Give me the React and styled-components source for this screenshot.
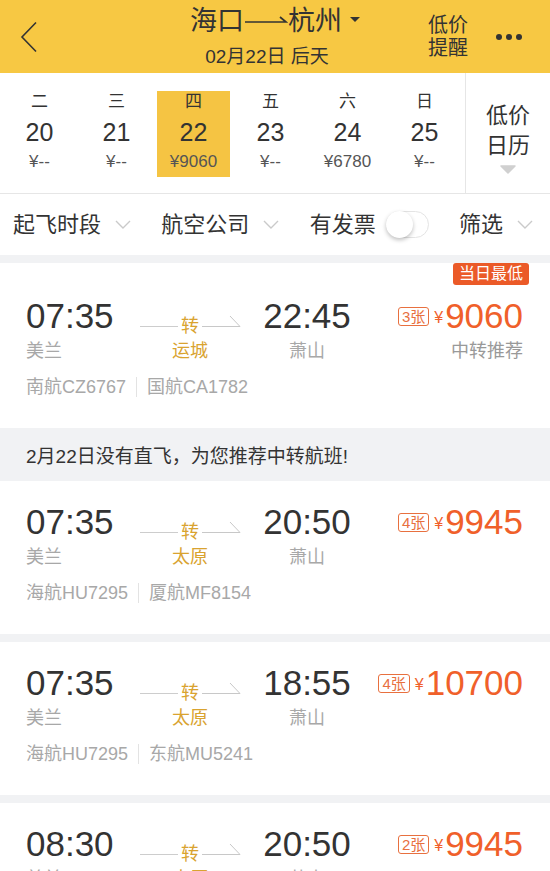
import React from 'react';
import styled, { createGlobalStyle } from 'styled-components';

const GlobalStyle = createGlobalStyle`
  html, body {
    margin: 0;
    padding: 0;
    background: #f1f2f4;
    overflow: hidden;
  }
  body {
    font-family: "Liberation Sans", "Noto Sans CJK SC", sans-serif;
    color: #333;
    -webkit-font-smoothing: antialiased;
  }
`;

const yellow = '#f7c843';
const orange = '#f0602a';
const gold = '#d9a330';

const Page = styled.div`
  width: 550px;
  height: 871px;
  overflow: hidden;
  background: #f1f2f4;
`;

/* ---------- header ---------- */

const Header = styled.header`
  display: grid;
  grid-template-columns: 1fr auto 1fr;
  align-items: center;
  height: 73px;
  background: ${yellow};
`;

const BackButton = styled.div`
  display: flex;
  align-items: center;
  padding-left: 20px;
`;

const TitleBlock = styled.div`
  display: flex;
  flex-direction: column;
  align-items: center;
  padding-bottom: 1px;
`;

const Title = styled.div`
  display: flex;
  align-items: center;
  font-size: 27px;
  line-height: 32px;
  color: #333;
`;

const Caret = styled.span`
  width: 0;
  height: 0;
  margin: -2px 0 0 8px;
  border-left: 5px solid transparent;
  border-right: 5px solid transparent;
  border-top: 5px solid #333;
`;

const Subtitle = styled.div`
  margin-top: 9px;
  padding-right: 16px;
  font-size: 19px;
  line-height: 22px;
  color: #333;
`;

const HeaderActions = styled.div`
  display: flex;
  align-items: center;
  justify-content: flex-end;
  padding-right: 28px;
`;

const RemindButton = styled.div`
  font-size: 20px;
  line-height: 23px;
  color: #333;
`;

const MoreDots = styled.div`
  display: flex;
  gap: 4px;
  margin-left: 28px;

  span {
    width: 6px;
    height: 6px;
    border-radius: 50%;
    background: #333;
  }
`;

/* ---------- date strip ---------- */

const DateStrip = styled.div`
  display: flex;
  height: 120px;
  background: #fff;
  border-bottom: 1px solid #e6e6e6;
`;

const Days = styled.div`
  display: grid;
  grid-template-columns: repeat(6, 77px);
  padding: 0 2px 0 1px;
  border-right: 1px solid #e6e6e6;
`;

const Day = styled.div`
  padding: 18px 2px 16px;
`;

const DayBox = styled.div`
  display: flex;
  flex-direction: column;
  align-items: center;
  height: 86px;
  background: ${(p) => (p.$active ? '#f5c443' : 'transparent')};
`;

const Weekday = styled.div`
  font-size: 17px;
  line-height: 22px;
  color: #333;
`;

const DayNumber = styled.div`
  margin-top: 4px;
  font-size: 25px;
  line-height: 30px;
  color: #333;
`;

const DayPrice = styled.div`
  margin-top: 5px;
  font-size: 17px;
  line-height: 20px;
  color: #555;
`;

const CalendarButton = styled.div`
  flex: 1;
  display: flex;
  flex-direction: column;
  align-items: center;
  padding-top: 28px;
  font-size: 22px;
  line-height: 30px;
  color: #333;
`;

/* ---------- filter bar ---------- */

const FilterBar = styled.div`
  display: flex;
  align-items: center;
  justify-content: space-between;
  height: 61px;
  padding: 0 17px 0 13px;
  background: #fff;
`;

const FilterItem = styled.div`
  display: flex;
  align-items: center;
  gap: ${(p) => (p.$tight ? '10px' : '14px')};
  font-size: 22px;
  line-height: 28px;
  color: #333;
`;

const Toggle = styled.div`
  position: relative;
  width: 43px;
  height: 27px;
  box-sizing: border-box;
  border: 1px solid #e4e4e4;
  border-radius: 14px;
  background: #fff;

  &::after {
    content: '';
    position: absolute;
    top: -1px;
    left: -1px;
    width: 27px;
    height: 27px;
    border-radius: 50%;
    background: #fff;
    box-shadow: 0 2px 4px rgba(0, 0, 0, 0.25);
  }
`;

/* ---------- flight list ---------- */

const Card = styled.div`
  position: relative;
  margin-top: ${(p) => (p.$flush ? '0' : '8px')};
  padding: ${(p) => (p.$badge ? '33px' : '21px')} 27px 29px 26px;
  background: #fff;
`;

const Badge = styled.div`
  position: absolute;
  top: 0;
  right: 21px;
  height: 22px;
  padding: 0 6px;
  border-radius: 3px;
  background: #eb5a28;
  color: #fff;
  font-size: 16px;
  line-height: 22px;
`;

const Notice = styled.div`
  display: flex;
  align-items: center;
  height: 53px;
  padding-left: 26px;
  font-size: 19px;
  color: #333;
`;

const FlightRow = styled.div`
  display: flex;
`;

const Column = styled.div`
  display: flex;
  flex-direction: column;
  align-items: ${(p) => p.$align || 'flex-start'};
  width: ${(p) => (p.$width ? `${p.$width}px` : 'auto')};
  flex: ${(p) => (p.$width ? 'none' : 1)};
`;

const Time = styled.div`
  font-size: 35px;
  line-height: 40px;
  color: #333;
`;

const Place = styled.div`
  margin-top: 3px;
  font-size: 18px;
  line-height: 24px;
  color: ${(p) => (p.$accent ? gold : '#a8a8a8')};
`;

const Transfer = styled.div`
  display: flex;
  align-items: center;
  align-self: stretch;
  height: 20px;
  margin-top: 20px;
`;

const TransferLine = styled.span`
  flex: 1;
  height: 1px;
  background: #cdcdcd;
`;

const TransferLabel = styled.span`
  padding: 0 3px;
  font-size: 18px;
  line-height: 20px;
  color: ${gold};
`;

const PriceRow = styled.div`
  display: flex;
  align-items: center;
  height: 40px;
`;

const TicketTag = styled.span`
  margin-right: 5px;
  padding: 0 3px;
  border: 1px solid #e8703f;
  border-radius: 3px;
  font-size: 15px;
  line-height: 17px;
  color: #e8703f;
`;

const Yen = styled.span`
  margin: 4px 2px 0 0;
  font-size: 16px;
  color: ${orange};
`;

const Amount = styled.span`
  font-size: 35px;
  line-height: 40px;
  color: ${orange};
`;

const PriceNote = styled.div`
  margin-top: 3px;
  font-size: 18px;
  line-height: 24px;
  color: #999;
`;

const Airlines = styled.div`
  display: flex;
  align-items: center;
  margin-top: 12px;
  font-size: 18px;
  line-height: 24px;
  color: #a8a8a8;
`;

const AirlineDivider = styled.span`
  width: 1px;
  height: 20px;
  margin: 0 10px;
  background: #e3e3e3;
`;

/* ---------- drawings ---------- */

const BackIcon = () => (
  <svg width="18" height="32" viewBox="0 0 18 32">
    <path d="M16 1.5 L2 16 L16 30.5" fill="none" stroke="#333" strokeWidth="1.6" />
  </svg>
);

const RouteArrow = () => (
  <svg width="44" height="28" viewBox="0 0 44 28">
    <path d="M1 15 H42 L36 10" fill="none" stroke="#333" strokeWidth="1.7" />
  </svg>
);

const Chevron = () => (
  <svg width="16" height="9" viewBox="0 0 16 9">
    <path d="M1 1 L8 8 L15 1" fill="none" stroke="#cacaca" strokeWidth="1.4" />
  </svg>
);

const DownTriangle = () => (
  <svg width="16" height="9" viewBox="0 0 16 9" style={{ marginTop: 4 }}>
    <path d="M1 1 H15 L8 8 Z" fill="#d0d0d0" stroke="#d0d0d0" strokeLinejoin="round" strokeWidth="1.5" />
  </svg>
);

const TransferHook = () => (
  <svg width="38" height="20" viewBox="0 0 38 20" style={{ overflow: 'visible' }}>
    <path d="M0 10.5 H38 L28 0" fill="none" stroke="#c8c8c8" strokeWidth="1" />
  </svg>
);

/* ---------- data ---------- */

const days = [
  { week: '二', day: '20', price: '¥--' },
  { week: '三', day: '21', price: '¥--' },
  { week: '四', day: '22', price: '¥9060', active: true },
  { week: '五', day: '23', price: '¥--' },
  { week: '六', day: '24', price: '¥6780' },
  { week: '日', day: '25', price: '¥--' },
];

const flights = [
  {
    dep: '07:35', arr: '22:45', via: '运城', tickets: '3张', price: '9060',
    note: '中转推荐', badge: '当日最低', airlines: ['南航CZ6767', '国航CA1782'],
  },
  {
    dep: '07:35', arr: '20:50', via: '太原', tickets: '4张', price: '9945',
    airlines: ['海航HU7295', '厦航MF8154'], notice: '2月22日没有直飞，为您推荐中转航班!',
  },
  {
    dep: '07:35', arr: '18:55', via: '太原', tickets: '4张', price: '10700',
    airlines: ['海航HU7295', '东航MU5241'],
  },
  {
    dep: '08:30', arr: '20:50', via: '太原', tickets: '2张', price: '9945',
    airlines: ['海航HU7295', '厦航MF8154'],
  },
];

const FlightCard = ({ flight }) => (
  <>
    {flight.notice && <Notice>{flight.notice}</Notice>}
    <Card $badge={!!flight.badge} $flush={!!flight.notice}>
      {flight.badge && <Badge>{flight.badge}</Badge>}
      <FlightRow>
        <Column $width={114}>
          <Time>{flight.dep}</Time>
          <Place>美兰</Place>
        </Column>
        <Column $width={100} $align="center">
          <Transfer>
            <TransferLine />
            <TransferLabel>转</TransferLabel>
            <TransferHook />
          </Transfer>
          <Place $accent>{flight.via}</Place>
        </Column>
        <Column $width={134} $align="center">
          <Time>{flight.arr}</Time>
          <Place>萧山</Place>
        </Column>
        <Column $align="flex-end">
          <PriceRow>
            <TicketTag>{flight.tickets}</TicketTag>
            <Yen>¥</Yen>
            <Amount>{flight.price}</Amount>
          </PriceRow>
          {flight.note && <PriceNote>{flight.note}</PriceNote>}
        </Column>
      </FlightRow>
      <Airlines>
        {flight.airlines[0]}
        <AirlineDivider />
        {flight.airlines[1]}
      </Airlines>
    </Card>
  </>
);

const App = () => (
  <Page>
    <GlobalStyle />
    <Header>
      <BackButton>
        <BackIcon />
      </BackButton>
      <TitleBlock>
        <Title>
          海口
          <RouteArrow />
          杭州
          <Caret />
        </Title>
        <Subtitle>02月22日 后天</Subtitle>
      </TitleBlock>
      <HeaderActions>
        <RemindButton>
          低价
          <br />
          提醒
        </RemindButton>
        <MoreDots>
          <span />
          <span />
          <span />
        </MoreDots>
      </HeaderActions>
    </Header>

    <DateStrip>
      <Days>
        {days.map((d) => (
          <Day key={d.day}>
            <DayBox $active={d.active}>
              <Weekday>{d.week}</Weekday>
              <DayNumber>{d.day}</DayNumber>
              <DayPrice>{d.price}</DayPrice>
            </DayBox>
          </Day>
        ))}
      </Days>
      <CalendarButton>
        <span>低价</span>
        <span>日历</span>
        <DownTriangle />
      </CalendarButton>
    </DateStrip>

    <FilterBar>
      <FilterItem>
        起飞时段
        <Chevron />
      </FilterItem>
      <FilterItem>
        航空公司
        <Chevron />
      </FilterItem>
      <FilterItem $tight>
        有发票
        <Toggle />
      </FilterItem>
      <FilterItem>
        筛选
        <Chevron />
      </FilterItem>
    </FilterBar>

    {flights.map((f, i) => (
      <FlightCard key={i} flight={f} />
    ))}
  </Page>
);

export default App;
